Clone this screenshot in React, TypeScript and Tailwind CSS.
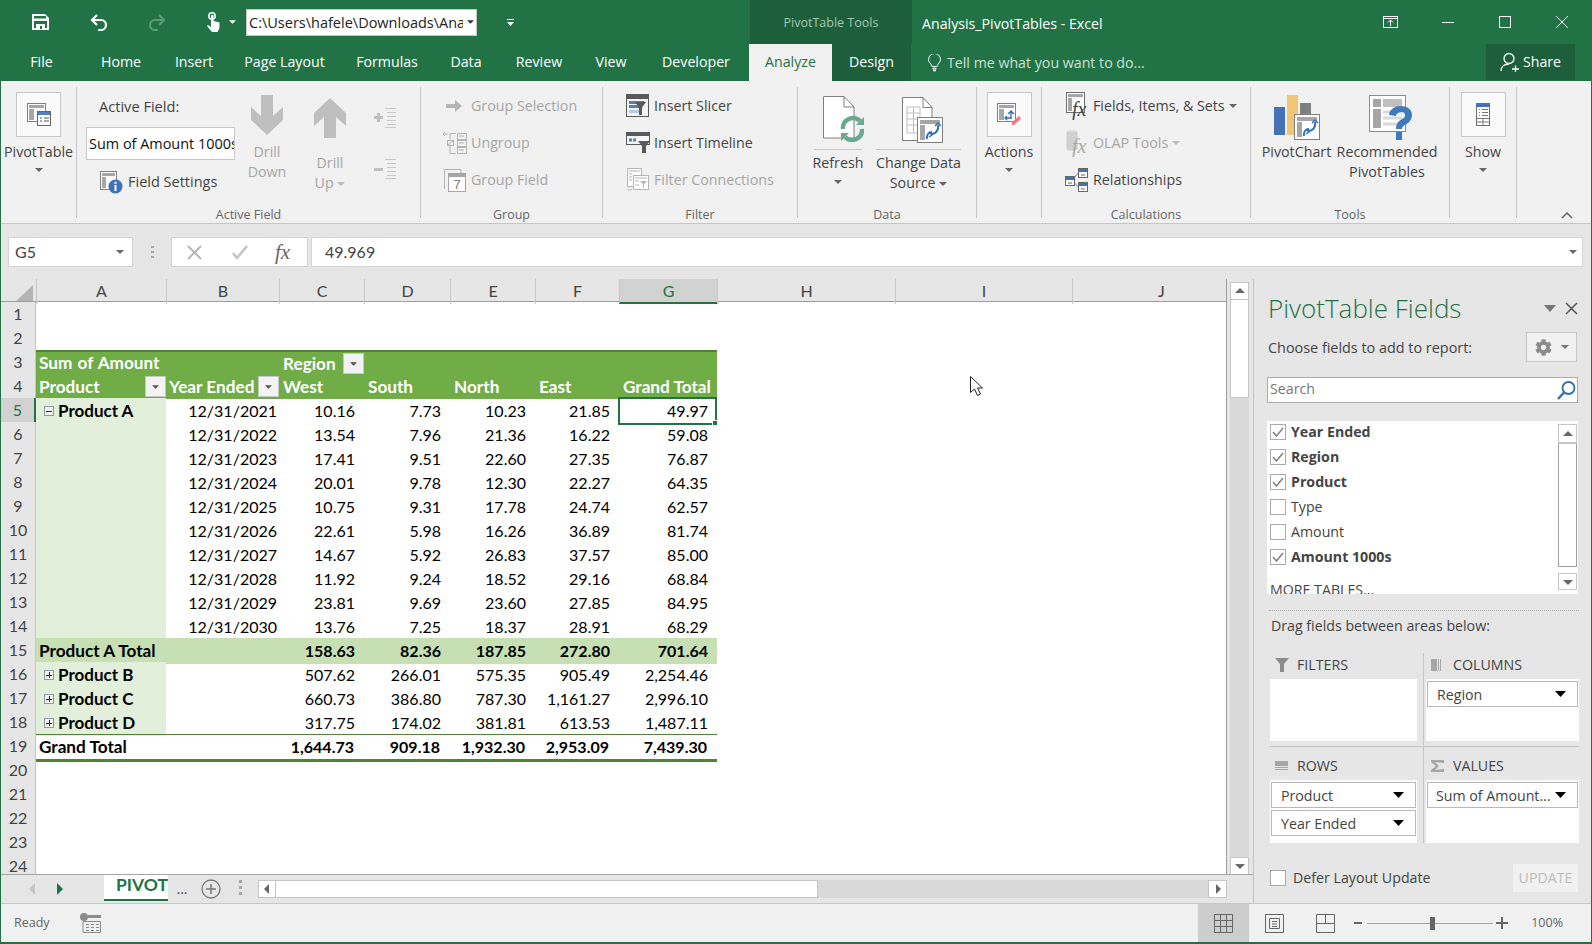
import React from "react";
import { FaCog } from "react-icons/fa";

const T = "text-[14.250px] text-[#444444] leading-[20px] whitespace-nowrap";
const D = "text-[14.250px] text-[#a6a6a6] leading-[20px] whitespace-nowrap";
const GRID = "grid grid-cols-[35px_130px_113px_85px_86px_85px_84px_98px_178px_177px_178px] h-[24px]";

const Caret = ({ c = "#666666", cls = "" }: { c?: string; cls?: string }) => (
  <svg width="8" height="4" viewBox="0 0 8 4" className={cls}><path d="M0 0h8L4 4z" fill={c} /></svg>
);

const PivotIcon = () => (
  <svg width="24" height="24" viewBox="0 0 24 24">
    <rect x="0.5" y="0.5" width="18" height="18" fill="#fff" stroke="#808080" />
    <rect x="2" y="2" width="15" height="3" fill="#a6a6a6" /><rect x="2" y="6" width="5" height="11" fill="#a6a6a6" />
    <rect x="10.5" y="8.5" width="13" height="14" fill="#fff" stroke="#666" /><rect x="11" y="9" width="12" height="3" fill="#4f81bd" />
    <path d="M13 15h2M13 18h2M13 21h0M17 15h5M17 18h5" stroke="#555" />
  </svg>
);
const FieldSettingsIcon = () => (
  <svg width="23" height="23" viewBox="0 0 23 23">
    <rect x="0.5" y="0.5" width="16" height="18" fill="#fff" stroke="#808080" />
    <rect x="2" y="2" width="13" height="3" fill="#a6a6a6" /><rect x="2" y="6" width="4" height="11" fill="#a6a6a6" />
    <circle cx="15.5" cy="15.5" r="7" fill="#3e73b5" /><rect x="14.5" y="14" width="2" height="6" fill="#fff" /><rect x="14.5" y="10.8" width="2" height="2" fill="#fff" />
  </svg>
);
const DrillDownIcon = () => (
  <svg width="32" height="40" viewBox="0 0 32 40"><path d="M10 0h12v21l10-9v13L16 40 0 25V12l10 9z" fill="#bfbfbf" /></svg>
);
const DrillUpIcon = () => (
  <svg width="32" height="40" viewBox="0 0 32 40"><path d="M10 40h12V19l10 9V15L16 0 0 15v13l10-9z" fill="#bfbfbf" /></svg>
);
const ExpandIcon = ({ minus }: { minus?: boolean }) => (
  <svg width="23" height="20" viewBox="0 0 23 20">
    <path d={minus ? "M0 9h9v3H0z" : "M3 5h3v3h3v3H6v3H3v-3H0V8h3z"} fill="#bfbfbf" />
    <path d="M11 .5h11M13 4.5h9M13 8.5h9M13 12.5h9M13 16.5h9M11 19.5h11" stroke="#c8c8c8" />
  </svg>
);
const GroupSelIcon = () => (
  <svg width="24" height="16" viewBox="0 0 24 16"><path d="M3 6h9V2l7 6-7 6v-4H3z" fill="#b5b5b5" /></svg>
);
const UngroupIcon = () => (
  <svg width="24" height="24" viewBox="0 0 24 24" fill="none" stroke="#b5b5b5">
    <path d="M0 3h5M2 1L0 3l2 2" /><rect x="14.5" y="2.5" width="9" height="6" /><rect x="14.5" y="9.5" width="9" height="6" /><rect x="14.5" y="16.5" width="9" height="6" />
    <path d="M7 2.5h6M7 2.5v6M7 15v7.500h6" /><rect x="4.500" y="9.500" width="6" height="5" /><path d="M16 5h5M16 12h5M16 19h5M5 14l5-4" />
  </svg>
);
const GroupFieldIcon = () => (
  <svg width="22" height="24" viewBox="0 0 22 24">
    <path d="M.5 21V1.500H17V5" fill="none" stroke="#b5b5b5" /><rect x="4.500" y="5.500" width="17" height="18" fill="#fff" stroke="#a6a6a6" /><rect x="5" y="6" width="16" height="3" fill="#a6a6a6" />
    <text x="13" y="21" fontSize="13" fill="#808080" textAnchor="middle" fontFamily="Liberation Sans">7</text>
  </svg>
);
const SlicerIcon = () => (
  <svg width="23" height="23" viewBox="0 0 23 23">
    <rect x="0.5" y="0.5" width="22" height="22" fill="#f5f5f5" stroke="#595959" /><rect x="1" y="1" width="21" height="4" fill="#595959" />
    <rect x="3" y="7" width="15" height="3" fill="#4f81bd" /><rect x="3" y="11" width="10" height="3" fill="#4f81bd" /><rect x="3" y="16" width="10" height="3" fill="#b8c8dc" />
    <path d="M9 8h11l-4 5.500V21h-3v-7.500z" fill="#595959" />
  </svg>
);
const TimelineIcon = () => (
  <svg width="24" height="21" viewBox="0 0 24 21">
    <rect x="0.5" y="0.5" width="23" height="12" fill="#f5f5f5" stroke="#595959" /><rect x="1" y="1" width="22" height="3" fill="#595959" />
    <path d="M3 8h8" stroke="#4f81bd" strokeWidth="3" strokeDasharray="3 1" />
    <path d="M12 9h12l-4 5v7h-4v-7z" fill="#595959" />
  </svg>
);
const ConnIcon = () => (
  <svg width="23" height="24" viewBox="0 0 23 24" fill="#fff" stroke="#b5b5b5">
    <rect x="1.500" y="0.500" width="14" height="18" /><path d="M3 3h11M3 6h3M3 9h3M3 12h3" /><rect x="7.500" y="7.500" width="15" height="14" />
    <path d="M9 10h12M9 13h4M9 17h4" /><path d="M14 13h7l-3 3v4h-1v-4z" fill="#b5b5b5" stroke="none" /><path d="M1 21c2 2 3 1 5 0" fill="none" />
  </svg>
);
const RefreshIcon = () => (
  <svg width="41" height="46" viewBox="0 0 41 46">
    <path d="M.5.500H21L31 11v31H.5z" fill="#fff" stroke="#7f7f7f" /><path d="M21 .5V11h10" fill="none" stroke="#7f7f7f" />
    <path d="M20 33a10 10 0 0 1 17-8M39 33a10 10 0 0 1-17 8" fill="none" stroke="#6aa98e" strokeWidth="4.500" />
    <path d="M33 29l8 0v-8zM26 37l-8 0v8z" fill="#6aa98e" />
  </svg>
);
const ChangeSrcIcon = () => (
  <svg width="41" height="47" viewBox="0 0 41 47">
    <path d="M.5.500H21l9 10v33H.5z" fill="#fff" stroke="#7f7f7f" /><path d="M21 .5v10h9" fill="none" stroke="#7f7f7f" />
    <path d="M5 10h13v26H5zM5 16h13M5 22h13M5 28h13M11.500 10v26" fill="none" stroke="#bdbdbd" />
    <rect x="15.500" y="20.500" width="25" height="25" fill="#fff" stroke="#7f7f7f" /><rect x="18" y="23" width="20" height="4" fill="#a6a6a6" /><rect x="18" y="28" width="5" height="15" fill="#a6a6a6" />
    <path d="M36 28c1 5-2 9-7 9M25 42c-1-4 2-7 5-7" fill="none" stroke="#2f6fb5" strokeWidth="2" /><path d="M33 29l3-3 3 3M27 35l3 3-3 2" fill="none" stroke="#2f6fb5" strokeWidth="1.500" />
  </svg>
);
const ActionsIcon = () => (
  <svg width="24" height="24" viewBox="0 0 24 24">
    <rect x="0.5" y="0.5" width="18" height="18" fill="#fff" stroke="#808080" /><rect x="2" y="2" width="15" height="3" fill="#a6a6a6" /><rect x="2" y="6" width="5" height="11" fill="#a6a6a6" />
    <path d="M14 8v8M11 11l3-3 3 3M8 15h6M10 13l-2 2 2 2" fill="none" stroke="#2f6fb5" strokeWidth="1.400" />
    <path d="M15 19l7-6 2 3-7 6h-2z" fill="#eb7d8b" />
  </svg>
);
const FxIcon = ({ db }: { db?: boolean }) => (
  <svg width="22" height="28" viewBox="0 0 22 28">
    {db ? (
      <g><ellipse cx="6" cy="3" rx="5.500" ry="2" fill="#dcdcdc" /><path d="M.5 3v17c1 2 10 2 11 0V3z" fill="#d0d0d0" /></g>
    ) : (
      <g><rect x="0.5" y="0.5" width="18" height="20" fill="#fff" stroke="#6e6e6e" /><rect x="2" y="2" width="15" height="3" fill="#a6a6a6" /><rect x="2" y="6" width="4" height="13" fill="#a6a6a6" /></g>
    )}
    <text x="6" y="24" fontSize="20" fontStyle="italic" fontFamily="Liberation Serif" fill={db ? "#aaaaaa" : "#444444"}>fx</text>
  </svg>
);
const RelIcon = () => (
  <svg width="23" height="24" viewBox="0 0 23 24">
    <path d="M7 12L14 4M7 12l7 8" fill="none" stroke="#808080" />
    <rect x="0.500" y="8.500" width="9" height="9" fill="#fff" stroke="#666" /><rect x="1" y="9" width="8" height="3" fill="#3e73b5" /><path d="M3 15h4" stroke="#666" />
    <rect x="13.500" y="0.500" width="9" height="9" fill="#fff" stroke="#666" /><rect x="14" y="1" width="8" height="3" fill="#3e73b5" /><path d="M16 7h4" stroke="#666" />
    <rect x="13.500" y="14.500" width="9" height="9" fill="#fff" stroke="#666" /><rect x="14" y="15" width="8" height="3" fill="#3e73b5" /><path d="M16 21h4" stroke="#666" />
  </svg>
);
const ChartIcon = () => (
  <svg width="46" height="45" viewBox="0 0 46 45">
    <rect x="0" y="12" width="11" height="28" fill="#4472b4" /><rect x="13" y="0" width="11" height="40" fill="#f0c674" /><rect x="26" y="8" width="11" height="11" fill="#7f7f7f" />
    <rect x="20.500" y="19.500" width="25" height="25" fill="#fff" stroke="#7f7f7f" /><rect x="23" y="22" width="20" height="4" fill="#a6a6a6" /><rect x="23" y="27" width="5" height="15" fill="#a6a6a6" />
    <path d="M41 27c1 5-2 9-7 9M30 41c-1-4 2-7 5-7" fill="none" stroke="#2f6fb5" strokeWidth="2" /><path d="M38 28l3-3 3 3M32 34l3 3-3 2" fill="none" stroke="#2f6fb5" strokeWidth="1.500" />
  </svg>
);
const RecoIcon = () => (
  <svg width="44" height="45" viewBox="0 0 44 45">
    <rect x="0.500" y="0.500" width="36" height="36" fill="#fff" stroke="#8c8c8c" /><rect x="4" y="4" width="8" height="8" fill="#a6a6a6" /><rect x="14" y="4" width="19" height="8" fill="#c0c0c0" />
    <rect x="4" y="14" width="8" height="19" fill="#a6a6a6" /><path d="M14 17h19M14 23h19M14 29h19" stroke="#d8d8d8" strokeWidth="3" />
    <path d="M20 20c1-12 23-12 23 0 0 6-4 8-7 10-2 1-3 2-3 4h-6c0-6 3-8 6-10 2-1 3-2 3-4 0-4-8-4-9 1z" fill="#3e7bbd" /><rect x="27" y="37" width="6" height="8" fill="#3e7bbd" />
  </svg>
);
const ShowIcon = () => (
  <svg width="14" height="23" viewBox="0 0 14 23">
    <rect x="0.500" y="0.500" width="13" height="22" fill="#fff" stroke="#6e6e6e" /><rect x="0" y="0" width="14" height="4" fill="#4472b4" />
    <path d="M3 6.500h1M3 9.500h1M3 12.500h1M6 6.500h6M6 9.500h6M6 12.500h6" stroke="#777" /><path d="M1 15.500h12M1 19h12M7 15.500V22" stroke="#777" />
  </svg>
);
const BigBox = ({ children }: { children: React.ReactNode }) => (
  <div className="w-[45px] h-[45px] bg-[#fafafa] border border-[#c6c6c6] flex items-center justify-center">{children}</div>
);
const Group = ({ w, label, children }: { w: string; label?: string; children: React.ReactNode }) => (
  <div className={`${w} h-[131px] mt-[6px] border-r border-[#c6c6c6] flex flex-col shrink-0`}>
    <div className="h-[116px] flex">{children}</div>
    <div className="h-[15px] text-center text-[12.500px] leading-[24px] text-[#666666] whitespace-nowrap">{label}</div>
  </div>
);
const SmallRow = ({ icon, text, dim, caret }: { icon: React.ReactNode; text: string; dim?: boolean; caret?: boolean }) => (
  <div className="h-[37px] flex items-center">
    <div className="w-[29px] flex justify-center">{icon}</div>
    <span className={`ml-[2px] ${dim ? D : T}`}>{text}</span>
    {caret && <Caret c={dim ? "#bbbbbb" : "#666666"} cls="ml-[4px]" />}
  </div>
);
const BigBoxBtn = ({ cls, icon, label }: { cls: string; icon: React.ReactNode; label: string }) => (
  <div className={`${cls} pt-[5px] flex flex-col items-center`}>
    <BigBox>{icon}</BigBox>
    <div className={`mt-[5px] ${T}`}>{label}</div>
    <Caret cls="mt-[6px]" />
  </div>
);

const Ribbon = () => (
  <div className="h-[143px] shrink-0 bg-[#f1f1f1] flex border-b border-[#c6c6c6]">
    <Group w="w-[76px]">
      <BigBoxBtn cls="w-[76px]" icon={<PivotIcon />} label="PivotTable" />
    </Group>
    <Group w="w-[344px]" label="Active Field">
      <div className="w-[167px] pl-[9px] flex flex-col">
        <div className={`ml-[13px] mt-[9px] ${T} !text-[14.600px]`}>Active Field:</div>
        <div className="mt-[11px] w-[149px] h-[33px] bg-white border border-[#c6c6c6] overflow-hidden pl-[2px] text-[14.450px] leading-[31px] text-[#111111] whitespace-nowrap">Sum of Amount 1000s</div>
        <div className="ml-[14px] mt-[10px] flex items-center h-[24px]"><FieldSettingsIcon /><span className={`ml-[5px] ${T} !text-[14.500px]`}>Field Settings</span></div>
      </div>
      <div className="w-[32px] ml-[7px] pt-[8px] flex flex-col items-center">
        <DrillDownIcon />
        <div className={`mt-[7px] text-center ${D}`}>Drill<br />Down</div>
      </div>
      <div className="w-[32px] ml-[31px] pt-[11px] flex flex-col items-center">
        <DrillUpIcon />
        <div className={`mt-[15px] text-center ${D}`}>Drill<br />Up <Caret c="#bbbbbb" cls="inline align-middle" /></div>
      </div>
      <div className="ml-[28px] pt-[21px] flex flex-col">
        <ExpandIcon />
        <div className="mt-[31px]"><ExpandIcon minus /></div>
      </div>
    </Group>
    <Group w="w-[182px]" label="Group">
      <div className="pl-[19px]">
        <SmallRow dim icon={<GroupSelIcon />} text="Group Selection" />
        <SmallRow dim icon={<UngroupIcon />} text="Ungroup" />
        <SmallRow dim icon={<GroupFieldIcon />} text="Group Field" />
      </div>
    </Group>
    <Group w="w-[195px]" label="Filter">
      <div className="pl-[20px]">
        <SmallRow icon={<SlicerIcon />} text="Insert Slicer" />
        <SmallRow icon={<TimelineIcon />} text="Insert Timeline" />
        <SmallRow dim icon={<ConnIcon />} text="Filter Connections" />
      </div>
    </Group>
    <Group w="w-[179px]" label="Data">
      <div className="w-[64px] ml-[8px] flex flex-col items-center">
        <div className="pt-[9px] h-[61px] ml-[10px]"><RefreshIcon /></div>
        <div className="w-[48px] border-t border-[#c6c6c6] mt-[1px]"></div>
        <div className={`mt-[3px] ${T}`}>Refresh</div>
        <Caret cls="mt-[7px]" />
      </div>
      <div className="w-[85px] ml-[6px] flex flex-col items-center">
        <div className="pt-[10px] h-[61px] ml-[8px]"><ChangeSrcIcon /></div>
        <div className="w-[85px] border-t border-[#c6c6c6] mt-[1px]"></div>
        <div className={`mt-[3px] text-center ${T}`}>Change Data<br />Source <Caret cls="inline align-middle" /></div>
      </div>
    </Group>
    <Group w="w-[65px]">
      <BigBoxBtn cls="w-[64px]" icon={<ActionsIcon />} label="Actions" />
    </Group>
    <Group w="w-[209px]" label="Calculations">
      <div className="pl-[20px]">
        <SmallRow icon={<FxIcon />} text="Fields, Items, & Sets" caret />
        <SmallRow dim caret icon={<FxIcon db />} text="OLAP Tools" />
        <SmallRow icon={<RelIcon />} text="Relationships" />
      </div>
    </Group>
    <Group w="w-[199px]" label="Tools">
      <div className="w-[91px] flex flex-col items-center">
        <div className="pt-[8px] h-[54px]"><ChartIcon /></div>
        <div className={`mt-[1px] ${T}`}>PivotChart</div>
      </div>
      <div className="w-[108px] -ml-[9px] flex flex-col items-center">
        <div className="pt-[8px] h-[54px] ml-[7px]"><RecoIcon /></div>
        <div className={`mt-[1px] text-center ${T}`}>Recommended<br />PivotTables</div>
      </div>
    </Group>
    <Group w="w-[67px]">
      <BigBoxBtn cls="w-[66px]" icon={<ShowIcon />} label="Show" />
    </Group>
    <div className="flex-1 flex justify-end items-end pb-[4px] pr-[18px]">
      <svg width="12" height="7" viewBox="0 0 12 7" fill="none" stroke="#666" strokeWidth="1.500"><path d="M1 6l5-5 5 5" /></svg>
    </div>
  </div>
);

const tabs: [string, string][] = [["File", "w-[81px]"], ["Home", "w-[78px]"], ["Insert", "w-[68px]"], ["Page Layout", "w-[113px]"], ["Formulas", "w-[92px]"], ["Data", "w-[66px]"], ["Review", "w-[80px]"], ["View", "w-[64px]"], ["Developer", "w-[106px]"]];

const Header = () => (
  <div className="bg-[#217346] shrink-0">
    <div className="h-[44px] flex items-center">
      <svg className="ml-[31px]" width="17" height="16" viewBox="0 0 17 16">
        <path d="M0 0h13l4 4v12H0z" fill="#fff" /><rect x="2" y="2" width="12" height="2.500" fill="#217346" /><rect x="2" y="7" width="13" height="7" fill="#217346" /><rect x="4" y="10" width="9" height="6" fill="#fff" /><rect x="8" y="12" width="2" height="3" fill="#217346" />
      </svg>
      <svg className="ml-[41px]" width="18" height="17" viewBox="0 0 18 17" fill="none" stroke="#fff" strokeWidth="2.200"><path d="M2 6h9a5 5 0 0 1 0 10H8" /><path d="M7 1L2 6l5 5" /></svg>
      <svg className="ml-[40px]" width="18" height="17" viewBox="0 0 18 17" fill="none" stroke="#5d9a7a" strokeWidth="2.200"><path d="M16 6H7a5 5 0 0 0 0 10h3" /><path d="M11 1l5 5-5 5" /></svg>
      <svg className="ml-[40px]" width="15" height="20" viewBox="0 0 15 20"><circle cx="6" cy="4" r="3.200" fill="none" stroke="#fff" strokeWidth="1.500" /><path d="M5 3h2.500v6l6 1.500V16l-2 4H6l-5-6 1-1 3 2z" fill="#fff" /></svg>
      <Caret c="#fff" cls="ml-[8px] w-[7px]" />
      <div className="ml-[10px] w-[231px] h-[27px] bg-white border border-[#c6c6c6] flex items-center pl-[2px]">
        <span className="w-[214px] overflow-hidden whitespace-nowrap text-[14.500px] text-[#222222] leading-[25px]">C:\Users\hafele\Downloads\Analysis_PivotTables.xlsx</span>
        <Caret c="#333" cls="ml-[4px] w-[7px]" />
      </div>
      <svg className="ml-[30px]" width="7" height="7" viewBox="0 0 7 7"><path d="M0 0h7v1H0zM0 3h7L3.500 7z" fill="#fff" /></svg>
      <div className="ml-[236px] w-[162px] h-full bg-[#1c5f3a] flex items-center justify-center text-[12.500px] text-[#a4c7b3] pt-[3px]">PivotTable Tools</div>
      <div className="ml-[10px] pt-[4px] text-[14.200px] text-white">Analysis_PivotTables - Excel</div>
      <div className="ml-auto mr-[23px] flex items-center">
        <svg width="15" height="12" viewBox="0 0 15 12" fill="none" stroke="#fff"><rect x="0.500" y="0.500" width="14" height="11" /><path d="M0 2.500h15M7.500 10V4M5 6.500L7.500 4 10 6.500" /></svg>
        <svg className="ml-[44px]" width="12" height="1"><rect width="12" height="1" fill="#fff" /></svg>
        <svg className="ml-[45px]" width="12" height="12" fill="none" stroke="#fff"><rect x="0.500" y="0.500" width="11" height="11" /></svg>
        <svg className="ml-[45px]" width="12" height="12" viewBox="0 0 12 12" stroke="#fff"><path d="M0 0l12 12M12 0L0 12" /></svg>
      </div>
    </div>
    <div className="h-[37px] flex text-[14.200px] text-white leading-[36px]">
      {tabs.map(([t, w]) => <div key={t} className={`${w} text-center`}>{t}</div>)}
      <div className="w-[83px] text-center bg-[#f1f1f1] text-[#217346]">Analyze</div>
      <div className="w-[79px] text-center bg-[#1c5f3a]">Design</div>
      <div className="ml-[17px] flex items-center text-[#cde0d4]">
        <svg width="13" height="18" viewBox="0 0 13 18" fill="none" stroke="#fff"><path d="M4 12.500C3 9 .5 8.500.5 5.500a6 6 0 0 1 12 0c0 3-2.500 3.500-3.500 7z" /><path d="M4.500 14.500h4M5 16.500h3" strokeWidth="1.500" /></svg>
        <span className="ml-[6px]">Tell me what you want to do...</span>
      </div>
      <div className="ml-auto mr-[16px] w-[89px] h-[36px] bg-[#1c5f3a] flex items-center justify-center">
        <svg width="20" height="20" viewBox="0 0 20 20" fill="none" stroke="#fff" strokeWidth="1.300"><circle cx="9" cy="6.500" r="5" /><path d="M1 19c0-4 3-7 8-7M12 17h7M15.500 13.500v7" /></svg>
        <span className="ml-[3px]">Share</span>
      </div>
    </div>
  </div>
);

const FormulaBar = () => (
  <div className="h-[55px] shrink-0 bg-[#e6e6e6] flex pt-[13px] font-['Lato',sans-serif] text-[16px] text-[#444444]">
    <div className="ml-[7px] w-[125px] h-[30px] bg-white border border-[#d4d4d4] flex items-center justify-between pl-[6px] pr-[8px]">G5<Caret /></div>
    <div className="w-[38px] h-[30px] flex flex-col items-center justify-center gap-[3px]">
      <i className="w-[3px] h-[2px] bg-[#a6a6a6]"></i><i className="w-[3px] h-[2px] bg-[#a6a6a6]"></i><i className="w-[3px] h-[2px] bg-[#a6a6a6]"></i>
    </div>
    <div className="w-[137px] h-[30px] bg-white border border-[#d4d4d4] flex items-center">
      <svg className="ml-[15px]" width="15" height="15" viewBox="0 0 15 15" stroke="#b5b5b5" strokeWidth="2"><path d="M1 1l13 13M14 1L1 14" /></svg>
      <svg className="ml-[30px]" width="16" height="14" viewBox="0 0 16 14" fill="none" stroke="#c4c4c4" strokeWidth="2.500"><path d="M1 8l4 5L15 1" /></svg>
      <span className="ml-[27px] text-[21px] italic text-[#666666] font-['Liberation_Serif',serif] leading-none">fx</span>
    </div>
    <div className="ml-[3px] w-[1272px] h-[30px] bg-white border border-[#d4d4d4] flex items-center justify-between pl-[13px] pr-[5px]">49.969<Caret /></div>
  </div>
);

const colLabels: [string, string][] = [["A", ""], ["B", ""], ["C", ""], ["D", ""], ["E", ""], ["F", ""], ["G", "sel"], ["H", ""], ["I", ""], ["J", ""]];

const ColHeader = () => (
  <div className={`${GRID} !h-[23px] bg-[#e6e6e6] border-b border-[#9f9f9f] text-[16px] text-[#444444]`}>
    <div className="flex items-end justify-end p-[3px]"><svg width="17" height="16"><path d="M17 0v16H0z" fill="#b5b5b5" /></svg></div>
    {colLabels.map(([c, s]) => (
      <div key={c} className={`text-center leading-[23px] border-l border-[#c6c6c6] ${s ? "bg-[#d2d2d2] border-b-2 border-b-[#217346] text-[#217346]" : ""}`}>{c}</div>
    ))}
  </div>
);

const RowNo = ({ n, active }: { n: number; active?: boolean }) => (
  <div className={`text-center leading-[24px] border-b border-[#c6c6c6] text-[16px] ${active ? "bg-[#d2d2d2] border-r-2 border-r-[#217346] text-[#217346]" : "bg-[#e6e6e6] border-r border-[#9f9f9f] text-[#444444]"}`}>{n}</div>
);

const FilterBtn = ({ cls = "" }: { cls?: string }) => (
  <span className={`w-[21px] h-[21px] bg-[#f3f3f3] border border-[#c6c6c6] flex items-center justify-center shrink-0 ${cls}`}><Caret c="#555" cls="w-[7px]" /></span>
);
const Tree = ({ minus }: { minus?: boolean }) => (
  <span className="w-[10px] h-[10px] border border-[#8a9aa8] bg-[#eef3ee] flex items-center justify-center relative shrink-0 mr-[4px]">
    <i className="w-[6px] h-[1px] bg-[#333]"></i>
    {!minus && <i className="absolute w-[1px] h-[6px] bg-[#333]"></i>}
  </span>
);

const Cell = ({ v, cls = "" }: { v?: string; cls?: string }) => (
  <div className={`text-right pr-[9px] leading-[26px] ${cls}`}>{v}</div>
);

const prodA = [
  ["12/31/2021", "10.16", "7.73", "10.23", "21.85", "49.97"],
  ["12/31/2022", "13.54", "7.96", "21.36", "16.22", "59.08"],
  ["12/31/2023", "17.41", "9.51", "22.60", "27.35", "76.87"],
  ["12/31/2024", "20.01", "9.78", "12.30", "22.27", "64.35"],
  ["12/31/2025", "10.75", "9.31", "17.78", "24.74", "62.57"],
  ["12/31/2026", "22.61", "5.98", "16.26", "36.89", "81.74"],
  ["12/31/2027", "14.67", "5.92", "26.83", "37.57", "85.00"],
  ["12/31/2028", "11.92", "9.24", "18.52", "29.16", "68.84"],
  ["12/31/2029", "23.81", "9.69", "23.60", "27.85", "84.95"],
  ["12/31/2030", "13.76", "7.25", "18.37", "28.91", "68.29"],
];
const others = [
  ["Product B", "507.62", "266.01", "575.35", "905.49", "2,254.46"],
  ["Product C", "660.73", "386.80", "787.30", "1,161.27", "2,996.10"],
  ["Product D", "317.75", "174.02", "381.81", "613.53", "1,487.11"],
];

const Sheet = () => {
  const hd = "bg-[#70ad47] text-white font-bold text-[17.200px] leading-[26px] whitespace-nowrap overflow-hidden";
  const hd3 = `${hd} border-t-2 border-[#548235] !leading-[22px]`;
  const tot = "bg-[#c6e0b4] font-bold";
  const gt = "border-t border-b-[3px] border-[#548235] font-bold !leading-[24px] !pr-[10px]";
  return (
    <div className="w-[1226px] shrink-0 border-r border-[#9f9f9f] h-[595px] overflow-hidden bg-white relative font-['Lato',sans-serif] text-[16px] text-black">
      <ColHeader />
      {[1, 2].map((n) => <div key={n} className={GRID}><RowNo n={n} /></div>)}
      <div className={GRID}>
        <RowNo n={3} />
        <div className={`${hd3} pl-[3px] [word-spacing:1px]`}>Sum of Amount 1000s</div>
        <div className={hd3}></div>
        <div className={`${hd3} pl-[4px] flex items-center justify-between`}>Region<FilterBtn /></div>
        <div className={hd3}></div><div className={hd3}></div><div className={hd3}></div><div className={hd3}></div>
      </div>
      <div className={GRID}>
        <RowNo n={4} />
        <div className={`${hd} pl-[3px] flex items-center justify-between`}>Product<FilterBtn /></div>
        <div className={`${hd} pl-[3px] flex items-center justify-between`}>Year Ended<FilterBtn /></div>
        {["West", "South", "North", "East", "Grand Total"].map((t) => <div key={t} className={`${hd} pl-[4px]`}>{t}</div>)}
      </div>
      {prodA.map((r, i) => (
        <div key={r[0]} className={GRID}>
          <RowNo n={5 + i} active={i === 0} />
          <div className="bg-[#e2efda] flex items-center pl-[8px] font-bold text-[17px]">{i === 0 && <><Tree minus />Product A</>}</div>
          <Cell v={r[0]} cls="!pr-[2px]" />
          {r.slice(1, 5).map((v, j) => <Cell key={j} v={v} />)}
          <div className="relative">
            <Cell v={r[5]} />
            {i === 0 && <div className="absolute -left-[1px] -top-[1px] right-0 -bottom-[1px] border-2 border-[#217346] z-10"><i className="absolute -right-[3px] -bottom-[3px] w-[6px] h-[6px] bg-[#217346] border border-white"></i></div>}
          </div>
        </div>
      ))}
      <div className={GRID}>
        <RowNo n={15} />
        <div className={`${tot} pl-[3px] leading-[26px] whitespace-nowrap text-[17.200px]`}>Product A Total</div>
        <div className={tot}></div>
        {["158.63", "82.36", "187.85", "272.80", "701.64"].map((v) => <Cell key={v} v={v} cls={tot} />)}
      </div>
      {others.map((r, i) => (
        <div key={r[0]} className={GRID}>
          <RowNo n={16 + i} />
          <div className="bg-[#e2efda] flex items-center pl-[8px] font-bold text-[17px]"><Tree />{r[0]}</div>
          <div></div>
          {r.slice(1).map((v, j) => <Cell key={j} v={v} />)}
        </div>
      ))}
      <div className={GRID}>
        <RowNo n={19} />
        <div className={`${gt} pl-[3px] whitespace-nowrap text-[17.200px]`}>Grand Total</div>
        <div className={gt}></div>
        {["1,644.73", "909.18", "1,932.30", "2,953.09", "7,439.30"].map((v) => <Cell key={v} v={v} cls={gt} />)}
      </div>
      {[20, 21, 22, 23, 24].map((n) => <div key={n} className={GRID}><RowNo n={n} /></div>)}
      <svg className="absolute left-[969px] top-[97px]" width="14" height="21" viewBox="0 0 14 21"><path d="M.5.500v16l4-3.500 3 6.500 3-1.500-3-6h5z" fill="#fff" stroke="#222" /></svg>
    </div>
  );
};

const ScrollBtn = ({ d, cls = "" }: { d: "u" | "d" | "l" | "r"; cls?: string }) => {
  const p = { u: "M1 7L6 2l5 5z", d: "M1 3l5 5 5-5z", l: "M8 1L3 6l5 5z", r: "M4 1l5 5-5 5z" }[d];
  return (
    <div className={`bg-white border border-[#c6c6c6] flex items-center justify-center shrink-0 ${cls}`}>
      <svg width="12" height={d === "u" || d === "d" ? 10 : 12} viewBox={d === "u" || d === "d" ? "0 0 12 10" : "0 0 12 12"}><path d={p} fill="#666" /></svg>
    </div>
  );
};

const VScroll = () => (
  <div className="ml-[3px] w-[19px] h-[596px] pt-[3px] flex flex-col">
    <ScrollBtn d="u" cls="h-[18px]" />
    <div className="h-[98px] bg-white border border-[#c6c6c6] border-t-0"></div>
    <div className="flex-1 bg-[#d9d9d9]"></div>
    <ScrollBtn d="d" cls="h-[18px]" />
  </div>
);

const TabBar = () => (
  <div className="h-[29px] bg-[#e6e6e6] border-t border-[#a6a6a6] flex">
    <div className="w-[103px] flex items-center">
      <svg className="ml-[28px]" width="6" height="12"><path d="M6 0v12L0 6z" fill="#c6c6c6" /></svg>
      <svg className="ml-[22px]" width="6" height="12"><path d="M0 0v12l6-6z" fill="#217346" /></svg>
    </div>
    <div className="w-[64px] h-[26px] bg-white border-b-2 border-[#217346] overflow-hidden pl-[12px] text-[17.500px] font-bold font-['Lato',sans-serif] text-[#217346] leading-[20px] whitespace-nowrap">PIVOTTABLE</div>
    <div className="w-[28px] text-center text-[14px] text-[#444444] leading-[28px]">...</div>
    <svg className="ml-[5px] mt-[4px]" width="20" height="20" viewBox="0 0 20 20" fill="none" stroke="#777" strokeWidth="1.300"><circle cx="10" cy="10" r="9" /><path d="M10 5v10M5 10h10" strokeWidth="1.500" /></svg>
    <div className="ml-[18px] mt-[5px] flex flex-col items-center gap-[3px]">
      <i className="w-[3px] h-[3px] bg-[#a6a6a6]"></i><i className="w-[3px] h-[3px] bg-[#a6a6a6]"></i><i className="w-[3px] h-[3px] bg-[#a6a6a6]"></i>
    </div>
    <div className="ml-[16px] w-[969px] h-[18px] mt-[5px] flex">
      <ScrollBtn d="l" cls="w-[18px]" />
      <div className="w-[542px] bg-white border-y border-r border-[#c6c6c6]"></div>
      <div className="flex-1 bg-[#d9d9d9]"></div>
      <ScrollBtn d="r" cls="w-[19px]" />
    </div>
  </div>
);

const Field = ({ t, on }: { t: string; on?: boolean }) => (
  <div className="h-[25px] flex items-center shrink-0">
    <span className="ml-[3px] w-[16px] h-[16px] bg-white border border-[#ababab] flex items-center justify-center">
      {on && <svg width="12" height="10" viewBox="0 0 12 10" fill="none" stroke="#808080" strokeWidth="1.500"><path d="M1 5l3.500 4L11 1" /></svg>}
    </span>
    <span className={`ml-[5px] text-[14.200px] text-[#444444] ${on ? "font-bold" : ""}`}>{t}</span>
  </div>
);
const Chip = ({ t, cls = "" }: { t: string; cls?: string }) => (
  <div className={`h-[26px] bg-white border border-[#b8b8b8] flex items-center justify-between pl-[9px] pr-[11px] text-[14.200px] text-[#444444] ${cls}`}>
    <span className="pt-[1px]">{t}</span><svg width="11" height="6"><path d="M0 0h11L5.500 6z" fill="#000" /></svg>
  </div>
);
const AreaHead = ({ icon, t, cls }: { icon: React.ReactNode; t: string; cls: string }) => (
  <div className={`${cls} flex items-center text-[14.200px] text-[#444444] pl-[5px]`}>
    <span className="w-[22px] flex">{icon}</span>{t}
  </div>
);

const Panel = () => (
  <div className="w-[338px] bg-[#e6e6e6] border-l border-[#b9c9c5] pl-[14px] pr-[13px] flex flex-col">
    <div className="mt-[14px] h-[30px] flex items-center">
      <div className="text-[26px] font-light text-[#217346] leading-[30px] whitespace-nowrap">PivotTable Fields</div>
      <svg className="ml-auto" width="12" height="7"><path d="M0 0h12L6 7z" fill="#777" /></svg>
      <svg className="ml-[9px]" width="13" height="13" viewBox="0 0 13 13" stroke="#555" strokeWidth="1.500"><path d="M1 1l11 11M12 1L1 12" /></svg>
    </div>
    <div className="mt-[9px] h-[30px] flex items-center justify-between">
      <span className="pt-[2px] text-[14.400px] text-[#444444] whitespace-nowrap">Choose fields to add to report:</span>
      <div className="w-[51px] h-[30px] mr-[1px] bg-[#f1f1f1] border border-[#c6c6c6] flex items-center justify-center gap-[9px]">
        <FaCog className="text-[#8c8c8c] text-[17px]" /><Caret c="#777" />
      </div>
    </div>
    <div className="mt-[15px] -ml-[1px] h-[26px] bg-white border border-[#ababab] flex items-center justify-between pl-[2px] pr-[1px] text-[14.200px] text-[#777777]">
      <span className="pb-[2px]">Search</span>
      <svg width="19" height="19" viewBox="0 0 19 19" fill="none" stroke="#2f6fad" strokeWidth="1.800"><circle cx="11.500" cy="7" r="6" /><path d="M7 11.500L1 18" strokeWidth="2.400" /></svg>
    </div>
    <div className="mt-[18px] -ml-[1px] h-[173px] bg-white overflow-hidden flex relative">
      <div className="flex-1 -mt-[2px] flex flex-col">
        <Field t="Year Ended" on /><Field t="Region" on /><Field t="Product" on /><Field t="Type" /><Field t="Amount" /><Field t="Amount 1000s" on />
        <div className="ml-[3px] mt-[10px] text-[14.200px] text-[#444444]">MORE TABLES...</div>
      </div>
      <div className="w-[19px] mr-[1px] mt-[3px] flex flex-col h-[166px]">
        <ScrollBtn d="u" cls="h-[19px]" />
        <div className="h-[124px] bg-white border border-[#9f9f9f] border-t-[#c6c6c6]"></div>
        <div className="h-[6px]"></div>
        <ScrollBtn d="d" cls="h-[17px]" />
      </div>
    </div>
    <div className="mt-[16px] ml-[1px] -mr-[1px] border-t border-dotted border-[#b0b0b0]"></div>
    <div className="mt-[5px] ml-[3px] h-[20px] text-[14.200px] text-[#444444] leading-[20px]">Drag fields between areas below:</div>
    <div className="mt-[17px] ml-[2px] -mr-[1px]">
      <div className="h-[94px] flex border-b border-[#c6c6c6]">
        <div className="w-[154px] border-r border-[#c6c6c6]">
          <AreaHead cls="h-[26px] pb-[2px]" t="FILTERS" icon={<svg width="14" height="14"><path d="M0 0h14L9 6v8H5V6z" fill="#8c8c8c" /></svg>} />
          <div className="w-[147px] h-[62px] bg-white"></div>
        </div>
        <div className="flex-1 pl-[2px]">
          <AreaHead cls="h-[26px] pb-[2px]" t="COLUMNS" icon={<svg width="11" height="12"><path d="M0 0h6v12H0z" fill="#a6a6a6" /><path d="M7.500 0v12M9.500 0v12" stroke="#a6a6a6" /></svg>} />
          <div className="h-[62px] bg-white pt-[2px] px-[1px]"><Chip t="Region" /></div>
        </div>
      </div>
      <div className="h-[96px] flex">
        <div className="w-[154px] border-r border-[#c6c6c6]">
          <AreaHead cls="h-[33px] pt-[4px]" t="ROWS" icon={<svg width="13" height="10"><path d="M0 0h13v5H0z" fill="#a6a6a6" /><path d="M0 6.500h13M0 8.500h13" stroke="#a6a6a6" /></svg>} />
          <div className="w-[147px] h-[63px] bg-white pt-[2px] px-[1px] flex flex-col gap-[2px]"><Chip t="Product" /><Chip t="Year Ended" /></div>
        </div>
        <div className="flex-1 pl-[2px]">
          <AreaHead cls="h-[33px] pt-[4px]" t="VALUES" icon={<svg width="13" height="12"><path d="M0 0h13v3L4 2l4 4-4 4 9-1v3H0v-2l5-4-5-4z" fill="#a6a6a6" /></svg>} />
          <div className="h-[63px] bg-white pt-[2px] px-[1px]"><Chip t="Sum of Amount..." cls="!pl-[8px]" /></div>
        </div>
      </div>
    </div>
    <div className="mt-[21px] ml-[2px] h-[28px] flex items-center justify-between">
      <div className="flex items-center text-[14.200px] text-[#444444]"><span className="w-[16px] h-[16px] bg-white border border-[#ababab] mr-[7px]"></span>Defer Layout Update</div>
      <div className="w-[65px] h-[28px] bg-[#f1f1f1] text-center leading-[28px] text-[14.200px] text-[#bdbdbd]">UPDATE</div>
    </div>
  </div>
);

const StatusBar = () => (
  <div className="h-[41px] shrink-0 bg-[#f1f1f1] border-t border-t-[#c6c6c6] border-b-2 border-b-[#217346] flex items-center text-[12.500px] text-[#666666]">
    <span className="ml-[13px]">Ready</span>
    <svg className="ml-[30px]" width="21" height="20" viewBox="0 0 21 20" fill="none" stroke="#8c8c8c"><circle cx="4" cy="4" r="4" fill="#8c8c8c" stroke="none" /><path d="M8 3.500h13" strokeWidth="3" /><path d="M3 8.500h17.500v11H3zM6 11.500h3M11 11.500h3M16 11.500h3M6 14.500h3M11 14.500h3M16 14.500h3M6 17.500h3M11 17.500h3M16 17.500h3" /></svg>
    <div className="ml-auto w-[51px] h-[38px] bg-[#cdcdcd] flex items-center justify-center">
      <svg width="19" height="19" viewBox="0 0 19 19" fill="none" stroke="#666"><path d="M.5.500h18v18H.5zM6.500.5v18M12.500.5v18M.5 6.500h18M.5 12.500h18" /></svg>
    </div>
    <svg className="ml-[16px]" width="19" height="19" viewBox="0 0 19 19" fill="none" stroke="#666"><path d="M.5.500h18v18H.5zM4.500 4.500h10v10h-10zM7 7.500h5M7 10h5M7 12.500h5" /></svg>
    <svg className="ml-[32px]" width="19" height="19" viewBox="0 0 19 19" fill="none" stroke="#666"><path d="M.5.500h18v18H.5zM9.500.5v9M.5 9.500h18" /></svg>
    <div className="ml-[19px] flex items-center">
      <i className="w-[8px] h-[2px] bg-[#666]"></i>
      <div className="ml-[5px] w-[126px] h-[1px] bg-[#a6a6a6] relative"><i className="absolute left-[63px] -top-[6px] w-[5px] h-[13px] bg-[#666]"></i></div>
      <svg className="ml-[3px]" width="12" height="12"><path d="M5 0h2v5h5v2H7v5H5V7H0V5h5z" fill="#666" /></svg>
    </div>
    <span className="ml-[23px] mr-[28px]">100%</span>
  </div>
);

export default function App() {
  return (
    <div className="w-[1592px] h-[944px] overflow-hidden flex flex-col bg-[#217346] border-x border-[#217346] font-['Open_Sans',sans-serif]">
      <Header />
      <Ribbon />
      <FormulaBar />
      <div className="flex h-[624px] shrink-0">
        <div className="w-[1252px] bg-[#e6e6e6] flex flex-col">
          <div className="flex h-[595px] shrink-0"><Sheet /><VScroll /></div>
          <TabBar />
        </div>
        <Panel />
      </div>
      <StatusBar />
    </div>
  );
}
